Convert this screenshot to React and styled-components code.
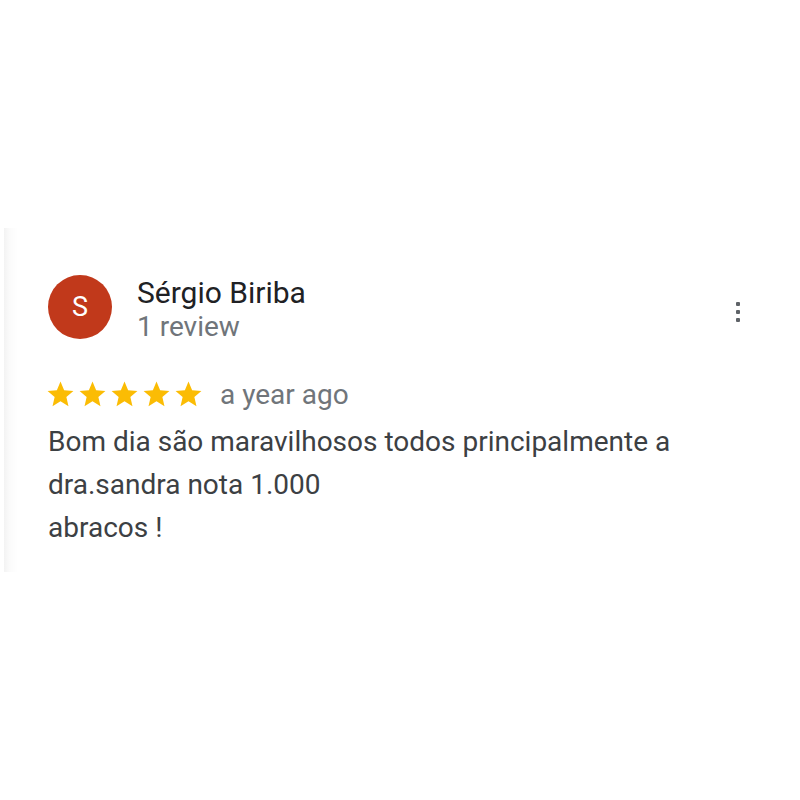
import styled, { createGlobalStyle } from "styled-components";

const Global = createGlobalStyle`
	body {
		margin: 0;
		background: #fff;
		font-family: Roboto, "Liberation Sans", Arial, sans-serif;
	}
`;

const Page = styled.main`
	min-height: 100vh;
	display: flex;
	align-items: center;
`;

const Card = styled.article`
	flex: 1;
	margin-left: 4px;
	height: 344px;
	box-sizing: border-box;
	padding: 47px 44px 0 44px;
	background: linear-gradient(to right, #f3f3f3 0, #fbfbfb 6px, #fff 14px);
`;

const Header = styled.header`
	display: flex;
	align-items: flex-start;
`;

const Avatar = styled.div`
	width: 64px;
	height: 64px;
	border-radius: 50%;
	background: ${(p) => p.color};
	color: #fff;
	display: flex;
	align-items: center;
	justify-content: center;
	font-size: 27px;
	flex-shrink: 0;
`;

const Who = styled.div`
	margin-left: 25px;
	margin-top: 1px;
	flex: 1;
`;

const Name = styled.div`
	font-size: 30px;
	line-height: 34px;
	color: #202124;
`;

const Meta = styled.div`
	font-size: 28px;
	line-height: 34px;
	color: #70757a;
`;

const MoreButton = styled.button`
	border: 0;
	background: none;
	padding: 0;
	margin-top: 27px;
	margin-right: 16px;
	display: flex;
	flex-direction: column;
	gap: 4px;
	cursor: pointer;
`;

const Dot = styled.span`
	width: 4px;
	height: 4px;
	background: #5f6368;
	border-radius: 1px;
`;

const RatingRow = styled.div`
	display: flex;
	align-items: center;
	height: 30px;
	margin-top: 35px;
`;

const Stars = styled.div`
	display: flex;
	gap: 1px;
	margin-left: -3px;
`;

const When = styled.span`
	margin-left: 16px;
	font-size: 28px;
	color: #70757a;
`;

const Body = styled.p`
	margin: 11px 0 0;
	font-size: 28px;
	line-height: 43px;
	color: #3c4043;
`;

const Star = () => (
	<svg width="31" height="31" viewBox="0 0 24 24">
		<path
			fill="#fbbc04"
			d="M12 17.27L18.18 21l-1.64-7.03L22 9.24l-7.19-.61L12 2 9.19 8.63 2 9.24l5.46 4.73L5.82 21z"
		/>
	</svg>
);

const App = () => {
	return (
		<Page>
			<Global />
			<Card>
				<Header>
					<Avatar color="#c1391b">S</Avatar>
					<Who>
						<Name>Sérgio Biriba</Name>
						<Meta>1 review</Meta>
					</Who>
					<MoreButton aria-label="More">
						<Dot />
						<Dot />
						<Dot />
					</MoreButton>
				</Header>
				<RatingRow>
					<Stars>
						{[0, 1, 2, 3, 4].map((i) => (
							<Star key={i} />
						))}
					</Stars>
					<When>a year ago</When>
				</RatingRow>
				<Body>
					Bom dia são maravilhosos todos principalmente a
					<br />
					dra.sandra nota 1.000
					<br />
					abracos !
				</Body>
			</Card>
		</Page>
	);
};

export default App;
